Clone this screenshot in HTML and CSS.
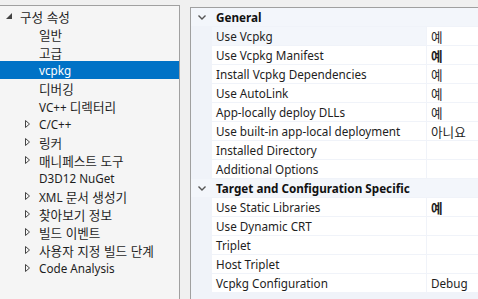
FILE: index.html
```html
<!DOCTYPE html>
<html lang="ko">
<head>
<meta charset="utf-8">
<link rel="stylesheet" href="styles.css">
</head>
<body>
<div class="window">
  <div class="tree">
    <div class="node root"><span class="tw"><svg width="6" height="6" viewBox="0 0 6 6"><polygon points="6,0 6,6 0,6" fill="#444"/></svg></span><span class="ko">구성 속성</span></div>
    <div class="node child"><span class="tw"></span><span class="ko">일반</span></div>
    <div class="node child"><span class="tw"></span><span class="ko">고급</span></div>
    <div class="node child selected"><span class="tw"></span><span>vcpkg</span></div>
    <div class="node child"><span class="tw"></span><span class="ko">디버깅</span></div>
    <div class="node child"><span class="tw"></span><span>VC++ <span class="ko">디렉터리</span></span></div>
    <div class="node child"><span class="tw"><svg width="5" height="8" viewBox="0 0 5 8"><polygon points="0.5,0.5 4.5,4 0.5,7.5" fill="none" stroke="#444"/></svg></span><span>C/C++</span></div>
    <div class="node child"><span class="tw"><svg width="5" height="8" viewBox="0 0 5 8"><polygon points="0.5,0.5 4.5,4 0.5,7.5" fill="none" stroke="#444"/></svg></span><span class="ko">링커</span></div>
    <div class="node child"><span class="tw"><svg width="5" height="8" viewBox="0 0 5 8"><polygon points="0.5,0.5 4.5,4 0.5,7.5" fill="none" stroke="#444"/></svg></span><span class="ko">매니페스트 도구</span></div>
    <div class="node child"><span class="tw"></span><span>D3D12 NuGet</span></div>
    <div class="node child"><span class="tw"><svg width="5" height="8" viewBox="0 0 5 8"><polygon points="0.5,0.5 4.5,4 0.5,7.5" fill="none" stroke="#444"/></svg></span><span>XML <span class="ko">문서 생성기</span></span></div>
    <div class="node child"><span class="tw"><svg width="5" height="8" viewBox="0 0 5 8"><polygon points="0.5,0.5 4.5,4 0.5,7.5" fill="none" stroke="#444"/></svg></span><span class="ko">찾아보기 정보</span></div>
    <div class="node child"><span class="tw"><svg width="5" height="8" viewBox="0 0 5 8"><polygon points="0.5,0.5 4.5,4 0.5,7.5" fill="none" stroke="#444"/></svg></span><span class="ko">빌드 이벤트</span></div>
    <div class="node child"><span class="tw"><svg width="5" height="8" viewBox="0 0 5 8"><polygon points="0.5,0.5 4.5,4 0.5,7.5" fill="none" stroke="#444"/></svg></span><span class="ko">사용자 지정 빌드 단계</span></div>
    <div class="node child"><span class="tw"><svg width="5" height="8" viewBox="0 0 5 8"><polygon points="0.5,0.5 4.5,4 0.5,7.5" fill="none" stroke="#444"/></svg></span><span>Code Analysis</span></div>
  </div>

  <div class="grid">
    <div class="cat"><span class="gut"><svg width="8" height="5" viewBox="0 0 8 5"><polyline points="0.5,0.5 4,4 7.5,0.5" fill="none" stroke="#555" stroke-width="1.4"/></svg></span><span class="cat-name">General</span></div>
    <div class="row sel"><span class="gut"></span><span class="name">Use Vcpkg</span><span class="val ko">예</span></div>
    <div class="row"><span class="gut"></span><span class="name">Use Vcpkg Manifest</span><span class="val ko b">예</span></div>
    <div class="row"><span class="gut"></span><span class="name">Install Vcpkg Dependencies</span><span class="val ko">예</span></div>
    <div class="row"><span class="gut"></span><span class="name">Use AutoLink</span><span class="val ko">예</span></div>
    <div class="row"><span class="gut"></span><span class="name">App-locally deploy DLLs</span><span class="val ko">예</span></div>
    <div class="row"><span class="gut"></span><span class="name">Use built-in app-local deployment</span><span class="val ko">아니요</span></div>
    <div class="row"><span class="gut"></span><span class="name">Installed Directory</span><span class="val"></span></div>
    <div class="row"><span class="gut"></span><span class="name">Additional Options</span><span class="val"></span></div>
    <div class="cat"><span class="gut"><svg width="8" height="5" viewBox="0 0 8 5"><polyline points="0.5,0.5 4,4 7.5,0.5" fill="none" stroke="#555" stroke-width="1.4"/></svg></span><span class="cat-name">Target and Configuration Specific</span></div>
    <div class="row"><span class="gut"></span><span class="name">Use Static Libraries</span><span class="val ko b">예</span></div>
    <div class="row"><span class="gut"></span><span class="name">Use Dynamic CRT</span><span class="val"></span></div>
    <div class="row"><span class="gut"></span><span class="name">Triplet</span><span class="val"></span></div>
    <div class="row"><span class="gut"></span><span class="name">Host Triplet</span><span class="val"></span></div>
    <div class="row"><span class="gut"></span><span class="name">Vcpkg Configuration</span><span class="val">Debug</span></div>
  </div>
</div>
</body>
</html>
```

FILE: styles.css
```css
html, body {
  margin: 0;
  padding: 0;
  background: #f0f0f0;
  height: 100%;
  overflow: hidden;
}
body {
  font-family: "Noto Sans", "Noto Sans CJK KR", sans-serif;
  font-size: 11.7px;
  color: #1e1e1e;
}
.ko {
  font-family: "Noto Sans CJK KR", sans-serif;
  font-size: 12.6px;
}
.window {
  display: flex;
  gap: 10px;
  height: 100%;
}
.tree {
  margin-top: 5px;
  width: 179px;
  flex: none;
  background: #f5f5f5;
  border-top: 1px solid #a0a0a0;
  border-right: 1px solid #a0a0a0;
  padding-top: 1px;
}
.node {
  height: 18px;
  display: flex;
  align-items: center;
  white-space: nowrap;
}
.node .tw {
  width: 14px;
  display: flex;
  align-items: center;
  justify-content: flex-start;
}
.root { padding-left: 6px; }
.child { padding-left: 25px; }
.selected {
  background: #0072c6;
  color: #fff;
}
.grid {
  margin-top: 7px;
  flex: 1;
  min-width: 0;
  border-top: 1px solid #a0a0a0;
  border-left: 1px solid #a0a0a0;
  background: #f0f3f9;
  display: flex;
  flex-direction: column;
  gap: 1px;
  overflow: hidden;
}
.cat, .row {
  display: flex;
  height: 18px;
  align-items: center;
  white-space: nowrap;
}
.gut {
  width: 21px;
  flex: none;
  display: flex;
  align-items: center;
  justify-content: center;
  height: 100%;
  padding-left: 1px;
  box-sizing: border-box;
}
.cat-name {
  font-weight: bold;
  padding-left: 4px;
  color: #111;
}
.cat { background: #f3f6fb; }
.name {
  width: 214px;
  flex: none;
  background: #fff;
  height: 100%;
  padding-left: 4px;
  box-sizing: border-box;
  display: flex;
  align-items: center;
  overflow: hidden;
}
.sel .name { background: #f3f6fb; }
.val {
  margin-left: 1px;
  flex: 1;
  background: #fff;
  height: 100%;
  padding-left: 4px;
  display: flex;
  align-items: center;
}
.val.b { font-weight: bold; }
```
